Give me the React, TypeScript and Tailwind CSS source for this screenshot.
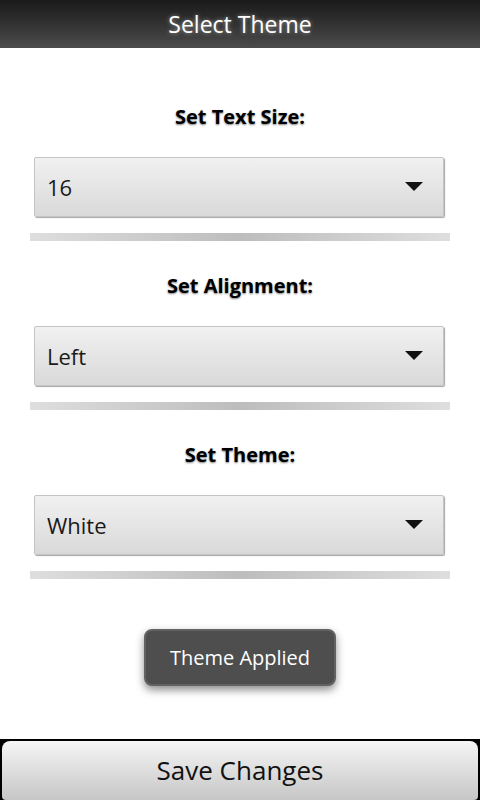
import React, { useState } from 'react';

const font = { fontFamily: '"Open Sans", "Noto Sans", "DejaVu Sans", sans-serif' };

function Spinner({ value }: { value: string }) {
    return (
        <div className="ml-[34px] mr-[36px] h-[60px] flex items-center justify-between pl-[12px] pr-[20px] rounded-[2px] border border-[#c4c4c4] bg-gradient-to-b from-[#f1f1f1] to-[#d9d9d9] shadow-[1px_1px_1px_rgba(0,0,0,0.35)]">
            <span className="text-[22px] text-[#1a1a1a]">{value}</span>
            <svg width="18" height="10" viewBox="0 0 18 10">
                <path d="M0 0 H18 L9 9 Z" fill="#111" />
            </svg>
        </div>
    );
}

function Section({ label, value }: { label: string; value: string }) {
    return (
        <div className="flex flex-col">
            <div className="h-[30px] flex items-center justify-center text-[20px] font-bold text-black [text-shadow:0_1px_2px_rgba(0,0,0,0.5)]">
                {label}
            </div>
            <div className="h-[25px]" />
            <Spinner value={value} />
            <div className="h-[16px]" />
            <div className="mx-[30px] h-[8px] bg-gradient-to-r from-[#dedede] via-[#bdbdbd] to-[#dedede]" />
        </div>
    );
}

export default function App() {
    const [values] = useState(['16', 'Left', 'White']);

    return (
        <div className="w-[480px] h-[800px] bg-white flex flex-col overflow-hidden" style={font}>
            {/* Title bar */}
            <div className="h-[48px] shrink-0 flex items-center justify-center bg-gradient-to-b from-[#1a1a1a] to-[#4c4c4c]">
                <span className="text-[23px] text-white [text-shadow:0_0_4px_rgba(255,255,255,0.5)]">Select Theme</span>
            </div>

            <div className="flex flex-col pt-[54px] gap-[30px] shrink-0">
                <Section label="Set Text Size:" value={values[0]} />
                <Section label="Set Alignment:" value={values[1]} />
                <Section label="Set Theme:" value={values[2]} />
            </div>

            {/* Toast */}
            <div className="flex justify-center mt-[50px] shrink-0">
                <div className="w-[192px] h-[57px] flex items-center justify-center rounded-[8px] bg-[#4e4e4e] border-2 border-[#626262] shadow-[0_4px_8px_rgba(0,0,0,0.45)]">
                    <span className="text-[20px] text-white">Theme Applied</span>
                </div>
            </div>

            <div className="flex-1" />

            {/* Save button */}
            <div className="h-[61px] shrink-0 bg-black pt-[2px] px-[2px]">
                <div className="h-full flex items-center justify-center rounded-t-[8px] rounded-b-[4px] bg-gradient-to-b from-[#f6f6f6] to-[#c6c6c6]">
                    <span className="text-[26px] text-[#111]">Save Changes</span>
                </div>
            </div>
        </div>
    );
}
